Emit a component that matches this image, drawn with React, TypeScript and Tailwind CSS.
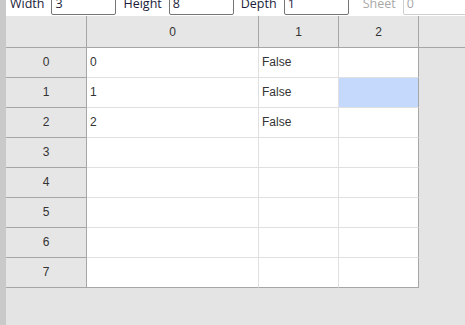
const columns = ["0", "1", "2"];
const rows = [
  ["0", "False", ""],
  ["1", "False", ""],
  ["2", "False", ""],
  ["", "", ""],
  ["", "", ""],
  ["", "", ""],
  ["", "", ""],
  ["", "", ""],
];
const widths = ["w-[172px]", "w-[80px]", "w-[80px]"];

function Field({ label, value, disabled }: { label: string; value: string; disabled?: boolean }) {
  return (
    <div className="flex items-center gap-[7px]">
      <span className={disabled ? "text-[#a8a8a8]" : "text-[#1b1b3a]"}>{label}</span>
      <div
        className={`flex h-[21px] items-center rounded-[2px] border px-[3px] ${
          disabled ? "w-[100px] border-[#cfcfcf] text-[#a8a8a8]" : "w-[65px] border-[#767676] text-[#1b1b3a]"
        }`}
      >
        {value}
      </div>
    </div>
  );
}

export default function App() {
  return (
    <div className="flex h-[325px] w-[465px] overflow-hidden bg-[#e4e4e4] font-['Liberation_Sans',Arial,sans-serif]">
      <div className="w-[6px] shrink-0 bg-[#c9c9c9]" />
      <div className="flex min-w-0 flex-1 flex-col">
        <div className="-mt-[8px] flex h-[24px] shrink-0 items-center gap-[7px] bg-white pl-[4px] font-['Open_Sans',sans-serif] text-[12.5px]">
          <Field label="Width" value="3" />
          <Field label="Height" value="8" />
          <Field label="Depth" value="1" />
          <div className="h-full w-px bg-[#d0d0d0]" />
          <Field label="Sheet" value="0" disabled />
        </div>
        <div className="flex flex-col text-[12px] text-[#333]">
          <div className="flex h-[32px] border-b border-[#a6a6a6] bg-[#e6e6e6]">
            <div className="w-[81px] border-r border-[#a6a6a6]" />
            {columns.map((c, i) => (
              <div
                key={c}
                className={`${widths[i]} flex items-center justify-center border-r border-[#a6a6a6]`}
              >
                {c}
              </div>
            ))}
          </div>
          {rows.map((r, ri) => (
            <div key={ri} className="flex h-[30px]">
              <div className="flex w-[81px] items-center justify-center border-r border-b border-[#a6a6a6] bg-[#e6e6e6] pb-[2px]">
                {ri}
              </div>
              {r.map((v, ci) => (
                <div
                  key={ci}
                  className={`${widths[ci]} flex items-center border-b px-[3px] pb-[2px] ${
                    ri === 7 ? "border-b-[#a6a6a6]" : "border-b-[#e0e0e0]"
                  } ${ci === 2 ? "border-r border-r-[#a6a6a6]" : "border-r border-r-[#e0e0e0]"} ${
                    ri === 1 && ci === 2 ? "bg-[#c5d9fc]" : "bg-white"
                  }`}
                >
                  {v}
                </div>
              ))}
            </div>
          ))}
        </div>
      </div>
    </div>
  );
}
